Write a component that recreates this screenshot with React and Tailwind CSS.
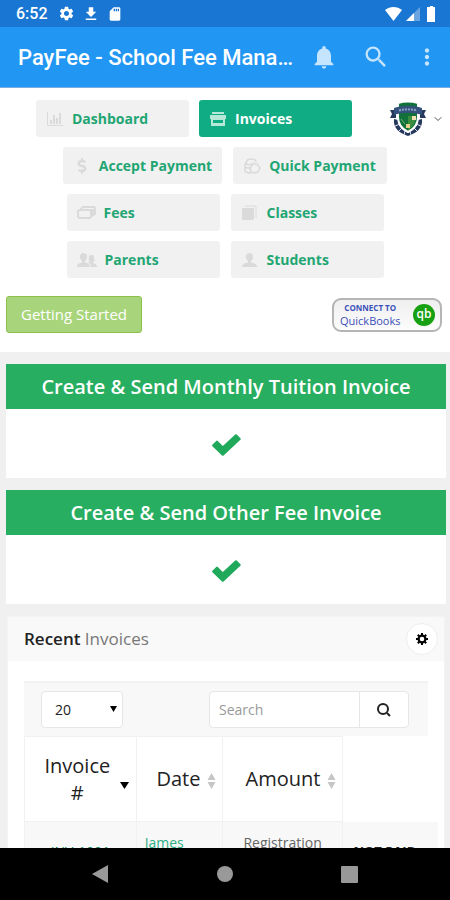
import clsx from 'clsx';
import { FaDollarSign } from 'react-icons/fa';
import {
  MdFileDownload,
  MdMoreVert,
  MdNotifications,
  MdSdCard,
  MdSearch,
  MdSettings,
} from 'react-icons/md';
import { FiChevronDown } from 'react-icons/fi';

const ChartIcon = () => (
  <svg width="16" height="14" viewBox="0 0 16 14" fill="none" stroke="currentColor">
    <path d="M.5 0v13.5H16" />
    <path d="M4 12V8M7 12V3M10 12V6M13 12V1" strokeWidth="2" />
  </svg>
);

const ArchiveIcon = () => (
  <svg width="16" height="16" viewBox="0 0 16 16" fill="currentColor">
    <path d="M2 1h12v2H2zM0 4h16v4H0zM1 8h14v7H1zM3 9v3h10V9z" fillRule="evenodd" />
  </svg>
);

const CardsIcon = () => (
  <svg width="19" height="13" viewBox="0 0 19 13" fill="none" stroke="currentColor" strokeWidth="2">
    <path d="M4 4V3l2-2h11l1 1v6l-3 2" />
    <path d="M14 3h4v5l-4 3z" fill="currentColor" stroke="none" />
    <rect x="1" y="4" width="13" height="8" rx="2" />
  </svg>
);

const CoinsIcon = () => (
  <svg width="17" height="16" viewBox="0 0 17 16" fill="none" stroke="currentColor" strokeWidth="1.5">
    <path d="M12 4c0-2-2-3-5-3S3 2 3 3L1 6v7c1 1.500 3 2 6 2M2 6c2 1 5 1 8-1M1 9c1 1 3 1 5 1" />
    <path d="M6 10l3-4h4l3 4-2 4-4 1-3-1z" fill="#f1f1f1" strokeLinejoin="round" />
  </svg>
);

const BookIcon = () => (
  <svg width="15" height="16" viewBox="0 0 15 16">
    <path d="M3 1h10a1 1 0 0 1 1 1v11" fill="none" stroke="currentColor" />
    <rect y="3" width="12" height="12" rx="1" fill="currentColor" />
  </svg>
);

const PersonIcon = () => (
  <svg width="15" height="14" viewBox="0 0 15 14" fill="currentColor">
    <path d="M7.500 0C10 0 11 1.500 11 4c0 2-1 3-2 4v1.500c3 .5 6 1.500 6 4.500H0c0-3 3-4 6-4.500V8C5 7 4 6 4 4c0-2.500 1-4 3.500-4z" />
  </svg>
);

const PeopleIcon = () => (
  <svg width="20" height="14" viewBox="0 0 20 14" fill="currentColor">
    <path d="M6.500 0C9 0 10 1.500 10 4c0 2-1 3-2 4v1.500c3 .5 5 1.500 5 4.500H0c0-3 2-4 5-4.500V8C4 7 3 6 3 4c0-2.500 1-4 3.500-4z" />
    <path d="M14.500 2C17 2 17.500 4 17 6l1 1-2 2v1c2 .5 4 1.500 4 4h-6c0-2-1-3.500-3-4.500l2-1L11.500 7l.5-1c-.5-2 0-4 2.500-4z" />
  </svg>
);

const CheckIcon = () => (
  <svg width="29" height="22" viewBox="0 0 29 22" fill="currentColor">
    <path d="M.4 10.800 4.200 7q.8-.8 1.600 0l5 5L23.200.6q.8-.8 1.600 0l3.600 3.600q.8.8 0 1.600L11.600 21.400q-.8.8-1.600 0L.4 12.200q-.6-.7 0-1.400z" />
  </svg>
);

const GearIcon = () => (
  <svg width="12" height="12" viewBox="0 0 12 12" fill="none" stroke="currentColor">
    <circle cx="6" cy="6" r="3.400" strokeWidth="2.200" />
    <path
      d="M6 0v2M6 10v2M0 6h2M10 6h2M1.800 1.800l1.400 1.400M8.800 8.800l1.400 1.400M10.200 1.800 8.800 3.200M3.200 8.800l-1.400 1.400"
      strokeWidth="2"
    />
  </svg>
);

const SearchIcon = () => (
  <svg width="16" height="16" viewBox="0 0 16 16" fill="none" stroke="currentColor" strokeWidth="2">
    <circle cx="7" cy="7" r="5" />
    <path d="m11 11 3 3" />
  </svg>
);

const Crest = () => (
  <svg width="36" height="36" viewBox="0 0 36 36" className="shrink-0">
    <path d="M4 18c-1 9 5 14 14 17 9-3 15-8 14-17l-4 1c0 6-4 10-10 13C12 29 8 25 8 19z" fill="#26385c" />
    <path d="m5 25 5-2M9 30l3-3M14 34l1-4M21 34l-1-4M27 30l-3-3M31 25l-5-2" stroke="#dfe6ef" />
    <path d="M8 2c7-2 13-2 20 0v14c0 7-4 12-10 15C12 28 8 23 8 16z" fill="#12713a" stroke="#fff" strokeWidth="2" />
    <path d="M18 15h8c0 6-3 11-8 14z" fill="#3b8e3e" />
    <rect x="22" y="15" width="4" height="4" fill="#f3e0b5" />
    <rect x="16" y="23" width="4" height="4" fill="#e4cf8c" />
    <path d="m11 18 4 5" stroke="#6bb26a" />
    <path d="M0 9h6v8H0l2-4zM36 9h-6v8h6l-2-4z" fill="#26385c" />
    <path d="M4 7c9-3 19-3 28 0v7c-9-3-19-3-28 0z" fill="#35517d" />
    <path d="M9 9.500c6-1.500 12-1.500 18 0" fill="none" stroke="#8fa4bf" strokeWidth="2" strokeDasharray="2 1" />
  </svg>
);

const SortIcon = () => (
  <svg width="9" height="16" viewBox="0 0 9 16" fill="#c6c6c6" className="mt-1 shrink-0">
    <path d="m4.500 0 4 7h-8zM4.500 16l4-7h-8z" />
  </svg>
);

const navRows = [
  [
    { label: 'Accept Payment', icon: <FaDollarSign size={16} />, wide: true },
    { label: 'Quick Payment', icon: <CoinsIcon />, wide: true },
  ],
  [
    { label: 'Fees', icon: <CardsIcon /> },
    { label: 'Classes', icon: <BookIcon /> },
  ],
  [
    { label: 'Parents', icon: <PeopleIcon /> },
    { label: 'Students', icon: <PersonIcon /> },
  ],
];

const NavButton = ({ label, icon, active, wide }) => (
  <a
    href="#"
    className={clsx(
      'flex h-[37px] items-center gap-2 rounded-[3px] px-[10px] text-sm font-bold whitespace-nowrap',
      wide ? 'min-w-[154px]' : 'w-[153px]',
      active ? 'bg-[#10ac84] text-white' : 'bg-[#f1f1f1] text-[#1fa673]'
    )}
  >
    <span
      className={clsx(
        'flex min-w-[18px] justify-center',
        active ? 'text-[#b5e8d6]' : 'text-[#dadada]'
      )}
    >
      {icon}
    </span>
    {label}
  </a>
);

const StatusBar = () => (
  <div className="flex h-[27px] shrink-0 items-center bg-[#1976d2] pl-4 pr-[14px] text-white">
    <span className="w-[42px] font-[Roboto] text-base font-medium">6:52</span>
    <div className="flex flex-1 items-center gap-[7px]">
      <MdSettings size={17} />
      <MdFileDownload size={18} />
      <MdSdCard size={16} />
    </div>
    <div className="flex items-center gap-1">
      <svg width="17" height="14" viewBox="0 0 17 14" fill="#fff">
        <path d="M0 3c5-4 12-4 17 0L8.500 14z" />
      </svg>
      <svg width="14" height="14" viewBox="0 0 14 14" fill="#fff">
        <path d="M14 0v14H0z" opacity=".35" />
        <path d="M8 6v8H0z" />
      </svg>
      <svg width="12" height="16" viewBox="0 0 12 16" fill="#fff">
        <path d="M4 1h2V0h3v1h2v15H3V1z" />
      </svg>
    </div>
  </div>
);

const AppBar = () => (
  <header className="flex h-[61px] shrink-0 items-center border-b border-[#7aaee0] bg-[#2196f3] pl-[18px] pr-[10px] text-white">
    <h1 className="min-w-0 flex-1 truncate font-[Roboto] text-[22px] font-medium">
      PayFee - School Fee Management
    </h1>
    <div className="flex shrink-0 items-center gap-6 pl-3 text-[#c5e4fd]">
      <button aria-label="Notifications">
        <MdNotifications size={28} />
      </button>
      <button aria-label="Search">
        <MdSearch size={28} />
      </button>
      <button aria-label="More">
        <MdMoreVert size={26} />
      </button>
    </div>
  </header>
);

const InvoiceCard = ({ title }) => (
  <section className="bg-white">
    <h2 className="flex h-[45px] items-center justify-center bg-[#27ae60] text-xl font-semibold text-white">
      {title}
    </h2>
    <div className="flex h-[69px] items-center justify-center pt-[2px] text-[#20a95a]">
      <CheckIcon />
    </div>
  </section>
);

const RecentInvoices = () => (
  <section className="mx-px border border-[#f3f3f3] bg-white">
    <div className="flex h-[44px] items-center justify-between bg-[#f9f9f9] pl-4 pr-[6px]">
      <h3 className="text-[17px] text-[#777]">
        <span className="font-semibold text-[#222]">Recent</span> Invoices
      </h3>
      <button
        aria-label="Settings"
        className="flex size-8 items-center justify-center rounded-full border border-[#eee] bg-white text-black"
      >
        <GearIcon />
      </button>
    </div>

    <div className="pl-4 pr-[6px] pt-5">
      <div className="mr-[10px] flex h-[55px] items-center justify-between border-t-2 border-[#f2f2f2] bg-[#f8f8f8] pl-[17px] pr-[19px]">
        <div className="relative">
          <select
            aria-label="Rows per page"
            className="h-[37px] w-[82px] appearance-none rounded-[4px] border border-[#e6e6e6] bg-white pl-[13px] text-sm text-[#222]"
          >
            <option>20</option>
            <option>50</option>
          </select>
          <svg
            width="7"
            height="6"
            viewBox="0 0 7 6"
            className="pointer-events-none absolute right-[6px] top-[15px]"
          >
            <path d="M0 0h7L3.500 6z" />
          </svg>
        </div>
        <div className="flex h-[37px] w-[200px] rounded-[4px] border border-[#e6e6e6] bg-white">
          <input
            type="text"
            aria-label="Search invoices"
            placeholder="Search"
            className="min-w-0 flex-1 pl-[9px] text-sm outline-none placeholder:text-[#999]"
          />
          <button
            aria-label="Search"
            className="flex w-[49px] items-center justify-center border-l border-[#e6e6e6] text-[#222]"
          >
            <SearchIcon />
          </button>
        </div>
      </div>

      <table className="w-full table-fixed border-collapse text-[#222]">
        <colgroup>
          <col className="w-[27%]" />
          <col className="w-[21%]" />
          <col className="w-[29%]" />
          <col />
        </colgroup>
        <thead>
          <tr className="h-[85px] text-xl">
            <th className="border border-[#f1f1f1] pl-[14px] font-normal">
              <div className="flex items-center gap-1">
                <span className="flex-1 leading-[27px]">Invoice #</span>
                <svg width="9" height="7" viewBox="0 0 9 7" className="mt-3 mr-[7px]">
                  <path d="M0 0h9L4.500 7z" />
                </svg>
              </div>
            </th>
            <th className="border border-[#f1f1f1] font-normal">
              <div className="flex items-center justify-end gap-[7px] pr-[6px]">
                Date <SortIcon />
              </div>
            </th>
            <th className="border border-[#f1f1f1] font-normal">
              <div className="flex items-center justify-end gap-[7px] pr-[6px]">
                Amount <SortIcon />
              </div>
            </th>
            <th aria-label="Status" />
          </tr>
        </thead>
        <tbody>
          <tr className="h-[80px] bg-[#f8f8f8] align-top text-sm">
            <td className="border border-[#f1f1f1] pt-5 text-center text-[#16825c]">
              INV-1001
            </td>
            <td className="border border-[#f1f1f1] pl-2 pt-[11px] text-[#2fae84]">
              <a href="#">James</a>
            </td>
            <td className="border border-[#f1f1f1] pl-5 pt-[11px] text-[#666]">
              Registration
            </td>
            <td className="pl-[10px] pt-5 text-[13px] font-bold">NOT PAID</td>
          </tr>
        </tbody>
      </table>
    </div>
  </section>
);

const SystemNav = () => (
  <nav className="grid h-[52px] shrink-0 grid-cols-3 items-center bg-black px-[38px] text-[#999]">
    <button aria-label="Back" className="flex justify-center">
      <svg width="18" height="18" viewBox="0 0 18 18" fill="currentColor">
        <path d="M17 0v18L1 9z" />
      </svg>
    </button>
    <button aria-label="Home" className="flex justify-center">
      <span className="size-4 rounded-full bg-[#999]" />
    </button>
    <button aria-label="Overview" className="flex justify-center">
      <span className="size-[17px] rounded-[1px] bg-[#999]" />
    </button>
  </nav>
);

const App = () => {
  return (
    <div className="flex h-screen flex-col overflow-hidden bg-[#f0f0f0] font-['Open_Sans',sans-serif]">
      <StatusBar />
      <AppBar />

      <main className="min-h-0 flex-1 overflow-hidden">
        <div className="bg-white pb-[19px] pt-3">
          <div className="flex flex-col gap-[10px]">
            <div className="flex items-center">
              <div className="flex flex-1 justify-center gap-[10px]">
                <NavButton label="Dashboard" icon={<ChartIcon />} />
                <NavButton label="Invoices" icon={<ArchiveIcon />} active />
              </div>
              <button
                aria-label="Account"
                className="-my-1 flex w-[62px] items-center gap-[6px] pl-[2px] text-[#555]"
              >
                <Crest />
                <FiChevronDown size={12} />
              </button>
            </div>
            {navRows.map((row) => (
              <div key={row[0].label} className="flex justify-center gap-[11px]">
                {row.map((item) => (
                  <NavButton key={item.label} {...item} />
                ))}
              </div>
            ))}
          </div>

          <div className="mt-[18px] flex items-center justify-between pl-[6px] pr-2">
            <button className="h-[37px] rounded-[3px] border border-[#8cc04b] bg-[#a8d57b] px-[14px] text-[15px] text-white">
              Getting Started
            </button>
            <button className="flex h-[34px] w-[110px] items-center justify-between rounded-[9px] border-2 border-[#b5b5b5] bg-gradient-to-b from-[#efefef] to-[#fcfcfc] pl-[6px] pr-[5px]">
              <span className="flex flex-col items-center text-[#3a50b8]">
                <span className="text-[8px] leading-[12px] font-bold">CONNECT TO</span>
                <span className="text-[11px] leading-[14px]">QuickBooks</span>
              </span>
              <span className="flex size-[22px] items-center justify-center rounded-full bg-[#16a012] pb-[2px] text-xs leading-none font-semibold text-white">
                qb
              </span>
            </button>
          </div>
        </div>

        <div className="flex flex-col gap-3 pl-[6px] pr-1 pt-3">
          <InvoiceCard title="Create & Send Monthly Tuition Invoice" />
          <InvoiceCard title="Create & Send Other Fee Invoice" />
          <RecentInvoices />
        </div>
      </main>

      <SystemNav />
    </div>
  );
};

export default App;
